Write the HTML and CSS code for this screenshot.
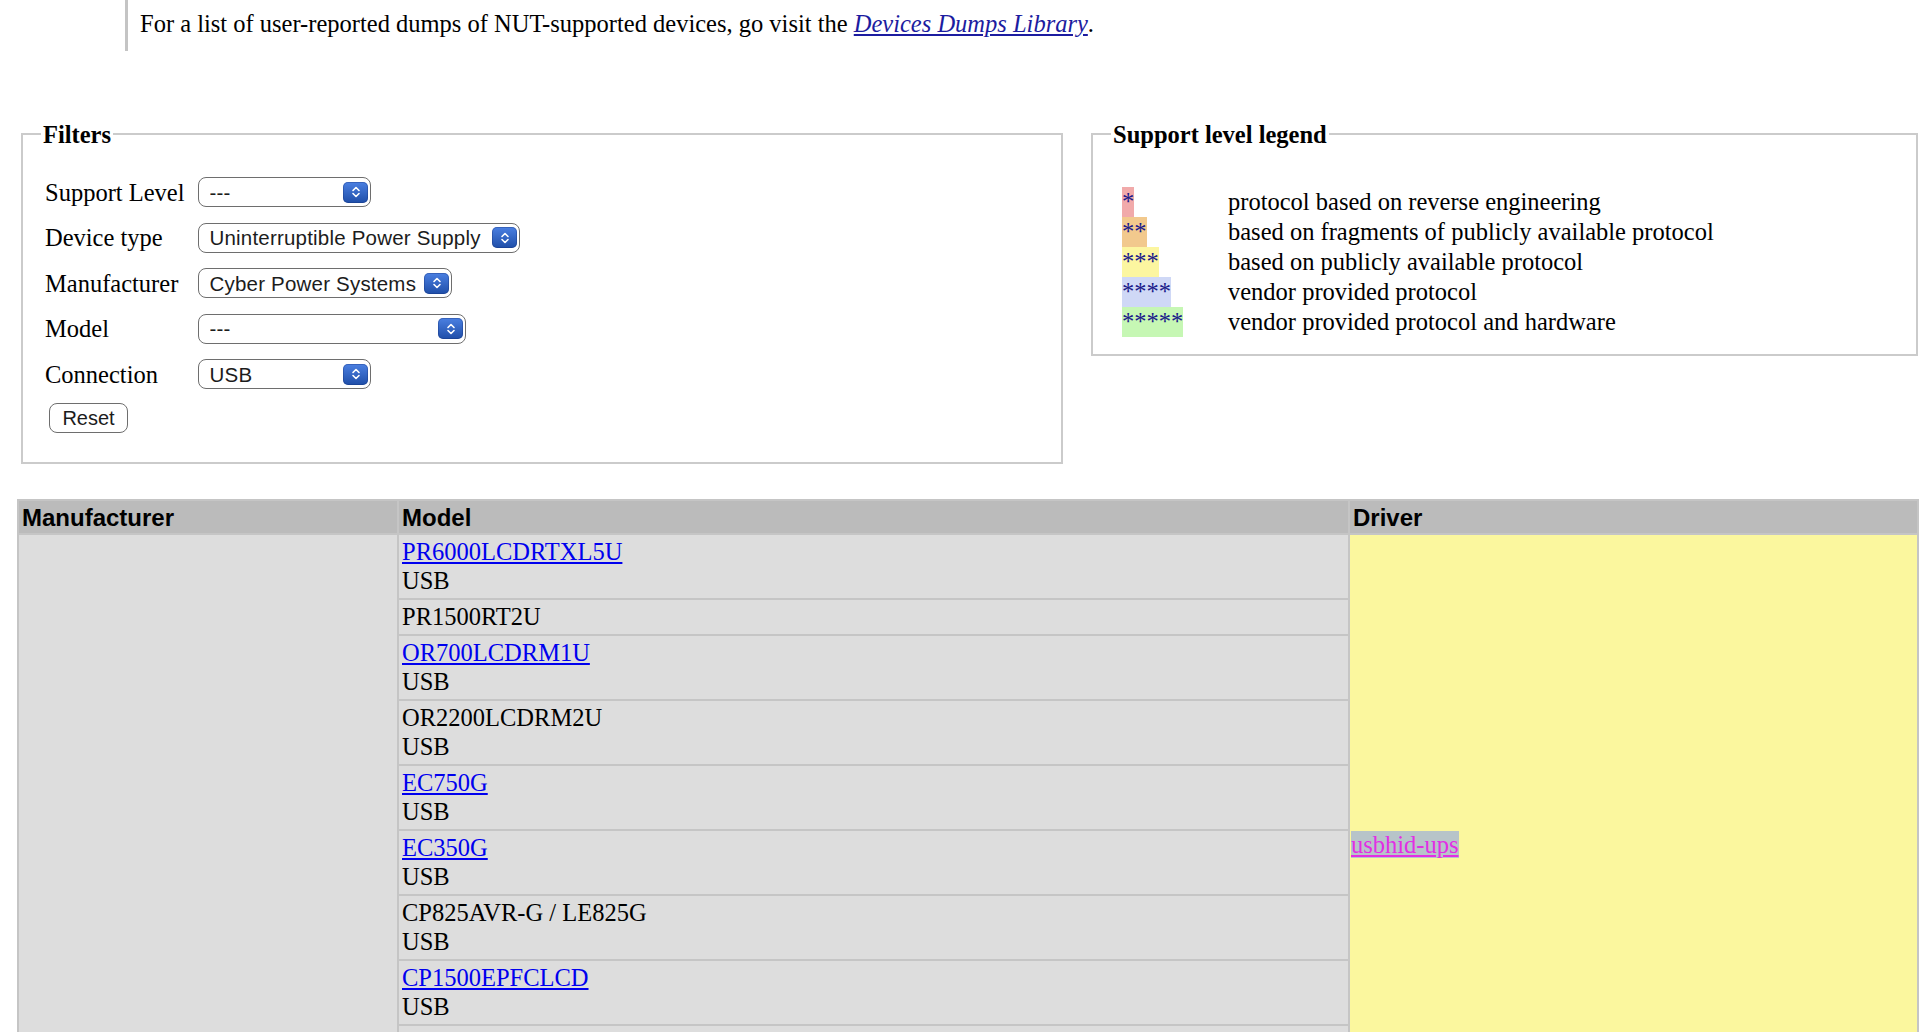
FILE: index.html
```html
<!DOCTYPE html>
<html lang="en">
<head>
<meta charset="utf-8">
<title>NUT Hardware Compatibility List</title>
<link rel="stylesheet" href="styles.css">
</head>
<body>
<blockquote class="note">For a list of user-reported dumps of NUT-supported devices, go visit the <a href="#ddl">Devices Dumps Library</a>.</blockquote>

<div class="panels">
  <fieldset class="box filters">
    <legend>Filters</legend>
    <div class="box-body">
      <div class="filter-grid">
        <label for="f-level">Support Level</label>
        <span class="sel sel-level"><select id="f-level"><option>---</option></select><span class="knob"><svg width="10" height="14" viewBox="0 0 10 14"><path d="M2 5.5L5 2.5L8 5.5M2 8.5L5 11.5L8 8.5" fill="none" stroke="#fff" stroke-width="1.6" stroke-linecap="round" stroke-linejoin="round"/></svg></span></span>

        <label for="f-type">Device type</label>
        <span class="sel sel-type"><select id="f-type"><option>Uninterruptible Power Supply</option></select><span class="knob"><svg width="10" height="14" viewBox="0 0 10 14"><path d="M2 5.5L5 2.5L8 5.5M2 8.5L5 11.5L8 8.5" fill="none" stroke="#fff" stroke-width="1.6" stroke-linecap="round" stroke-linejoin="round"/></svg></span></span>

        <label for="f-mfr">Manufacturer</label>
        <span class="sel sel-mfr"><select id="f-mfr"><option>Cyber Power Systems</option></select><span class="knob"><svg width="10" height="14" viewBox="0 0 10 14"><path d="M2 5.5L5 2.5L8 5.5M2 8.5L5 11.5L8 8.5" fill="none" stroke="#fff" stroke-width="1.6" stroke-linecap="round" stroke-linejoin="round"/></svg></span></span>

        <label for="f-model">Model</label>
        <span class="sel sel-model"><select id="f-model"><option>---</option></select><span class="knob"><svg width="10" height="14" viewBox="0 0 10 14"><path d="M2 5.5L5 2.5L8 5.5M2 8.5L5 11.5L8 8.5" fill="none" stroke="#fff" stroke-width="1.6" stroke-linecap="round" stroke-linejoin="round"/></svg></span></span>

        <label for="f-conn">Connection</label>
        <span class="sel sel-conn"><select id="f-conn"><option>USB</option></select><span class="knob"><svg width="10" height="14" viewBox="0 0 10 14"><path d="M2 5.5L5 2.5L8 5.5M2 8.5L5 11.5L8 8.5" fill="none" stroke="#fff" stroke-width="1.6" stroke-linecap="round" stroke-linejoin="round"/></svg></span></span>
      </div>
      <button type="button" class="reset">Reset</button>
    </div>
  </fieldset>

  <fieldset class="box legendbox">
    <legend>Support level legend</legend>
    <div class="box-body">
      <div class="levels">
        <span class="stars lvl1">*</span><span class="desc">protocol based on reverse engineering</span>
        <span class="stars lvl2">**</span><span class="desc">based on fragments of publicly available protocol</span>
        <span class="stars lvl3">***</span><span class="desc">based on publicly available protocol</span>
        <span class="stars lvl4">****</span><span class="desc">vendor provided protocol</span>
        <span class="stars lvl5">*****</span><span class="desc">vendor provided protocol and hardware</span>
      </div>
    </div>
  </fieldset>
</div>

<table class="hcl">
  <colgroup><col class="c-mfr"><col class="c-model"><col class="c-driver"></colgroup>
  <thead>
    <tr><th>Manufacturer</th><th>Model</th><th>Driver</th></tr>
  </thead>
  <tbody>
    <tr>
      <td class="mfr" rowspan="10"></td>
      <td><a href="#m1">PR6000LCDRTXL5U</a><br>USB</td>
      <td class="driver" rowspan="10"><a href="#usbhid">usbhid-ups</a></td>
    </tr>
    <tr><td>PR1500RT2U</td></tr>
    <tr><td><a href="#m3">OR700LCDRM1U</a><br>USB</td></tr>
    <tr><td>OR2200LCDRM2U<br>USB</td></tr>
    <tr><td><a href="#m5">EC750G</a><br>USB</td></tr>
    <tr><td><a href="#m6">EC350G</a><br>USB</td></tr>
    <tr><td>CP825AVR-G / LE825G<br>USB</td></tr>
    <tr><td><a href="#m8">CP1500EPFCLCD</a><br>USB</td></tr>
    <tr><td>CP1350EPFCLCD<br>USB</td></tr>
    <tr><td>CP1500AVRLCD<br>USB</td></tr>
  </tbody>
</table>
</body>
</html>
```
FILE: styles.css
```css
html, body {
  margin: 0;
  padding: 0;
  background: #ffffff;
}

body {
  font-family: "Liberation Serif", "Times New Roman", serif;
  font-size: 24.5px;
  line-height: 29px;
  color: #000000;
}

.note {
  margin: 0 0 0 125px;
  padding: 9px 0 13px 12px;
  border-left: 3px solid #c4c4c4;
}

.note a {
  color: #1c1ca0;
  font-style: italic;
}

.panels {
  display: flex;
  align-items: flex-start;
  gap: 28px;
  margin: 68.5px 0 0 21px;
}

.box {
  margin: 0;
  padding: 0;
  min-width: 0;
  box-sizing: border-box;
  border: 2px solid #cbcbcb;
}

.box legend {
  margin-left: 18px;
  padding: 0 2px;
  font-weight: bold;
  line-height: 29px;
}

.filters {
  width: 1042px;
}

.filters .box-body {
  padding: 28.5px 0 29px 22px;
}

.filter-grid {
  display: grid;
  grid-template-columns: 153px auto;
  row-gap: 15.5px;
  align-items: center;
  justify-items: start;
}

.sel {
  display: inline-flex;
  align-items: center;
  box-sizing: border-box;
  height: 30px;
  padding: 0 2px 0 10.5px;
  border: 1.5px solid #6e6e6e;
  border-radius: 8px;
  background: #ffffff;
}

.sel select {
  flex: 1;
  min-width: 0;
  height: 100%;
  margin: 0;
  padding: 0;
  border: 0;
  outline: none;
  background: transparent;
  -webkit-appearance: none;
  appearance: none;
  font-family: "Liberation Sans", Arial, sans-serif;
  font-size: 20.5px;
  letter-spacing: 0.2px;
  color: #1c1c1c;
}

.sel-level { width: 173px; }
.sel-type { width: 322px; }
.sel-mfr { width: 254px; }
.sel-model { width: 268px; }
.sel-conn { width: 173px; }

.knob {
  flex: none;
  display: flex;
  align-items: center;
  justify-content: center;
  width: 25px;
  height: 21px;
  border-radius: 5px;
  background: linear-gradient(#4b80e2, #1f4ea8);
  box-shadow: inset 0 0 0 1px rgba(20, 50, 120, 0.35);
}

.reset {
  display: block;
  box-sizing: border-box;
  width: 79px;
  height: 30px;
  margin: 14px 0 0 4px;
  padding: 0;
  border: 1.5px solid #6e6e6e;
  border-radius: 8px;
  background: #ffffff;
  font-family: "Liberation Sans", Arial, sans-serif;
  font-size: 20px;
  color: #1c1c1c;
}

.legendbox {
  width: 827px;
}

.legendbox .box-body {
  padding: 38.5px 0 17px 29px;
}

.levels {
  display: grid;
  grid-template-columns: 106px auto;
  line-height: 30px;
  align-items: start;
}

.stars {
  justify-self: start;
  color: #1a1a8a;
  height: 30px;
}

.lvl1 { background: #f1aaaa; }
.lvl2 { background: #f2c98d; }
.lvl3 { background: #fcf6a0; }
.lvl4 { background: #cfd8f6; }
.lvl5 { background: #c6f7b4; }

.hcl {
  width: 1900px;
  margin: 35px 0 0 17px;
  border-collapse: collapse;
  table-layout: fixed;
}

.c-mfr { width: 380px; }
.c-model { width: 951px; }
.c-driver { width: 569px; }

.hcl th,
.hcl td {
  border: 2px solid #c5c5c5;
  text-align: left;
  vertical-align: top;
}

.hcl th {
  padding: 2px 3px 1px;
  background: #bbbbbb;
  font-family: "Liberation Sans", Arial, sans-serif;
  font-size: 24px;
  font-weight: bold;
}

.hcl td {
  padding: 2px 3px 3px;
  background: #dddddd;
}

.hcl td a {
  color: #0000ee;
}

.hcl td.mfr {
  vertical-align: middle;
}

.hcl td.driver {
  padding-left: 1px;
  vertical-align: middle;
  background: #fbf79e;
}

.hcl td.driver a {
  color: #e22ee4;
  background: #b7c4c9;
}
```
